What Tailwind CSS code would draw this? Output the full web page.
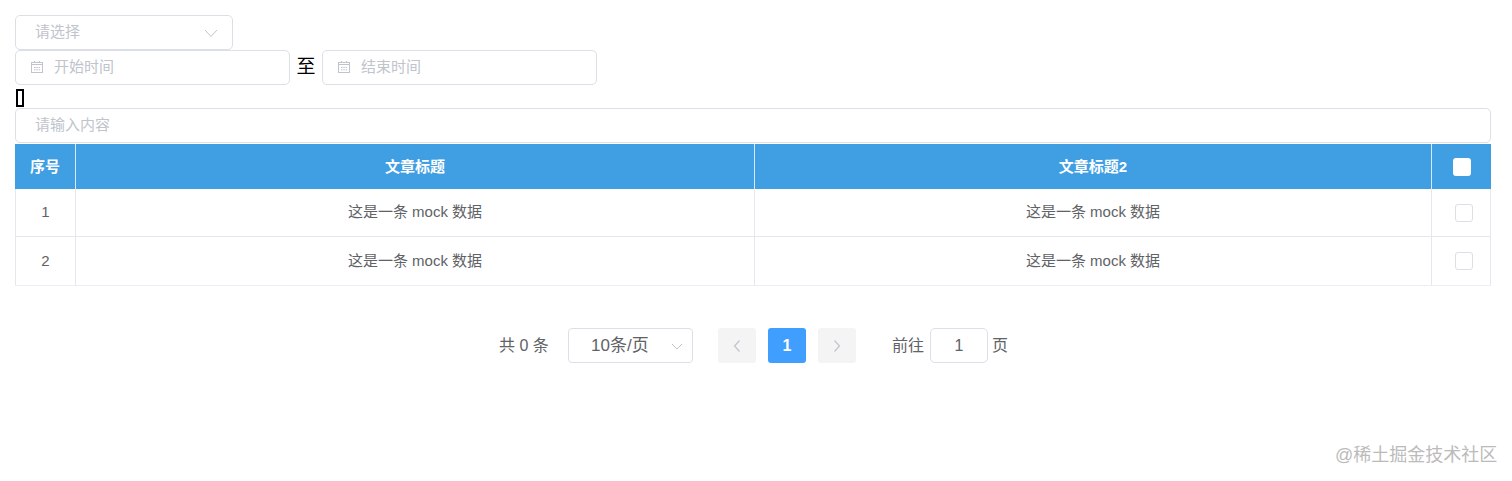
<!DOCTYPE html>
<html lang="zh">
<head>
<meta charset="utf-8">
<script src="https://cdn.jsdelivr.net/npm/@tailwindcss/browser@4"></script>
</head>
<body class="bg-white">
<div class="relative w-[1512px] h-[481px] overflow-hidden pl-[15px] pr-[21px] pt-[15px] font-['Liberation_Sans','Noto_Sans_CJK_SC',sans-serif] text-[#606266]">
  <div class="flex h-[35px] w-[218px] items-center justify-between rounded-[5px] border border-[#dcdfe6] pl-[19px] pr-[14px] text-[15px] text-[#c0c4cc]">
    <span>请选择</span>
    <svg class="w-[14px] h-[14px]" viewBox="0 0 14 14" fill="none" stroke="#c0c4cc" stroke-width="1"><path d="M1 4l6 6.5L13 4"/></svg>
  </div>
  <div class="flex h-[35px] items-center">
    <div class="flex h-[35px] w-[275px] items-center rounded-[5px] border border-[#dcdfe6] pl-[14px] text-[15px] text-[#c0c4cc]">
      <svg class="w-[14px] h-[14px] mr-[10px] -mt-[2px]" viewBox="0 0 14 14" fill="none" stroke="#c0c4cc" stroke-width="1"><rect x="1.5" y="2.5" width="11" height="10"/><path d="M1.5 4.500h11M4 7.500h1.500M6.300 7.500h1.500M8.600 7.500h1.500M4 9.800h1.500M6.300 9.800h1.500M8.600 9.800h1.500M4.500 1v2M9.500 1v2"/></svg>
      <span>开始时间</span>
    </div>
    <span class="w-[32px] text-center text-[19px] text-black">至</span>
    <div class="flex h-[35px] w-[275px] items-center rounded-[5px] border border-[#dcdfe6] pl-[14px] text-[15px] text-[#c0c4cc]">
      <svg class="w-[14px] h-[14px] mr-[10px] -mt-[2px]" viewBox="0 0 14 14" fill="none" stroke="#c0c4cc" stroke-width="1"><rect x="1.5" y="2.5" width="11" height="10"/><path d="M1.5 4.500h11M4 7.500h1.500M6.300 7.500h1.500M8.600 7.500h1.500M4 9.800h1.500M6.300 9.800h1.500M8.600 9.800h1.500M4.500 1v2M9.500 1v2"/></svg>
      <span>结束时间</span>
    </div>
  </div>
  <div class="h-[23px] flex items-center pl-px pt-[3px]">
    <span class="block w-[8px] h-[18px] border-2 border-black"></span>
  </div>
  <div class="flex h-[35px] items-center rounded-[5px] border border-[#dcdfe6] pl-[19px] text-[15px] text-[#c0c4cc]">请输入内容</div>
  <div class="mt-px grid grid-cols-[61px_679px_677px_59px] grid-rows-[45px_48px_48px] text-[15px] border-b border-[#ebeef5] h-[142px]">
    <div class="flex items-center justify-center bg-[#409ee3] pt-px text-white font-semibold border-r border-[#d6e9f8]">序号</div>
    <div class="flex items-center justify-center bg-[#409ee3] pt-px text-white font-semibold border-r border-[#d6e9f8]">文章标题</div>
    <div class="flex items-center justify-center bg-[#409ee3] pt-px text-white font-semibold border-r border-[#d6e9f8]">文章标题2</div>
    <div class="flex items-center justify-center bg-[#409ee3]"><span class="block w-[18px] h-[18px] rounded-[3px] bg-white"></span></div>

    <div class="flex items-center justify-center border-l border-r border-b border-[#e2e8ee]">1</div>
    <div class="flex items-center justify-center border-r border-b border-[#e2e8ee]">这是一条 mock 数据</div>
    <div class="flex items-center justify-center border-r border-b border-[#e2e8ee]">这是一条 mock 数据</div>
    <div class="flex items-center justify-center border-r border-b border-[#e2e8ee] pl-[5px]"><span class="block w-[18px] h-[18px] rounded-[3px] border border-[#dcdfe6]"></span></div>

    <div class="flex items-center justify-center border-l border-r border-[#e2e8ee]">2</div>
    <div class="flex items-center justify-center border-r border-[#e2e8ee]">这是一条 mock 数据</div>
    <div class="flex items-center justify-center border-r border-[#e2e8ee]">这是一条 mock 数据</div>
    <div class="flex items-center justify-center border-r border-[#e2e8ee] pl-[5px]"><span class="block w-[18px] h-[18px] rounded-[3px] border border-[#dcdfe6]"></span></div>
  </div>
  <div class="mt-[42px] flex h-[35px] items-center pl-[484px] text-[16px]">
    <span class="w-[69px]">共 0 条</span>
    <div class="flex h-[35px] w-[125px] items-center justify-between rounded-[4px] border border-[#dcdfe6] pl-[22px] pr-[9px]">
      <span class="text-[17px] pt-px">10条/页</span>
      <svg class="w-[12px] h-[12px]" viewBox="0 0 12 12" fill="none" stroke="#c0c4cc" stroke-width="1"><path d="M1 4l5 5 5-5"/></svg>
    </div>
    <div class="ml-[25px] flex h-[35px] w-[38px] items-center justify-center rounded-[3px] bg-[#f4f4f5]">
      <svg class="w-[12px] h-[14px]" viewBox="0 0 12 14" fill="none" stroke="#c0c4cc" stroke-width="1.2"><path d="M8.500 1.500L3.500 7l5 5.500"/></svg>
    </div>
    <div class="ml-[12px] flex h-[35px] w-[38px] items-center justify-center rounded-[3px] bg-[#409eff] font-bold text-white text-[16px]">1</div>
    <div class="ml-[12px] flex h-[35px] w-[38px] items-center justify-center rounded-[3px] bg-[#f4f4f5]">
      <svg class="w-[12px] h-[14px]" viewBox="0 0 12 14" fill="none" stroke="#c0c4cc" stroke-width="1.2"><path d="M3.500 1.500L8.500 7l-5 5.500"/></svg>
    </div>
    <span class="ml-[36px]">前往</span>
    <div class="ml-[6px] flex h-[35px] w-[58px] items-center justify-center rounded-[5px] border border-[#dcdfe6]">1</div>
    <span class="ml-[4px]">页</span>
  </div>
  <div class="absolute left-[1335px] top-[443px] text-[18px] leading-[24px] text-[#bbbbbb] whitespace-nowrap">@稀土掘金技术社区</div>
</div>
</body>
</html>
